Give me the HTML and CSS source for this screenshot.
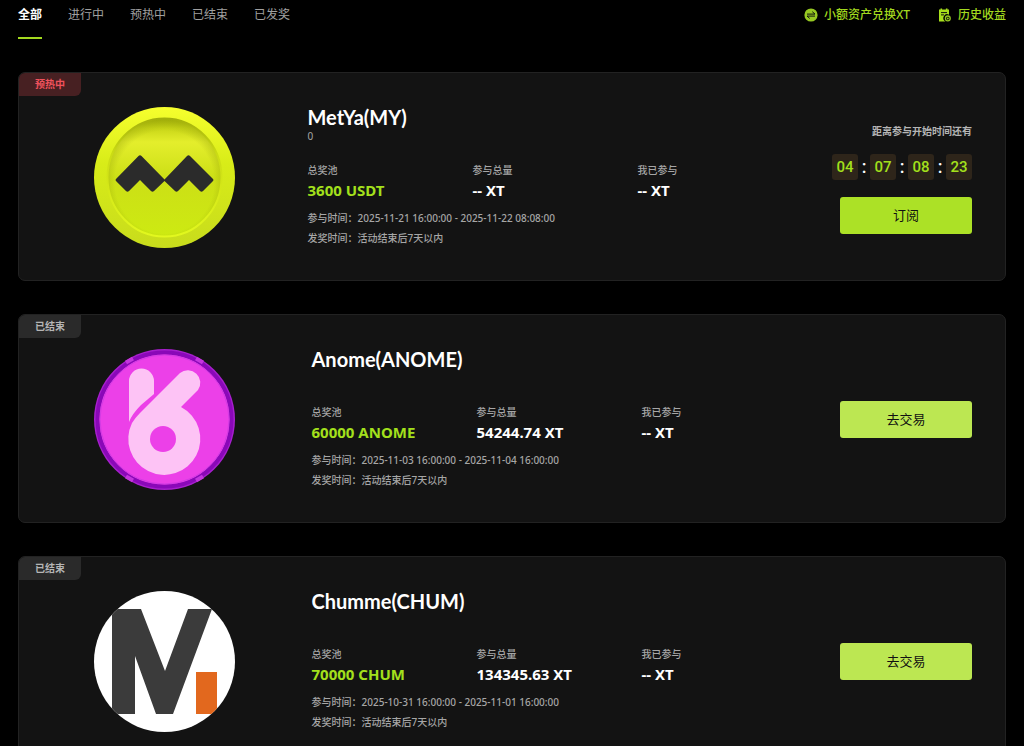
FILE: index.html
```html
<!DOCTYPE html>
<html lang="zh-CN">
<head>
    <meta charset="UTF-8">
    <meta name="viewport" content="width=device-width, initial-scale=1.0">
    <title>XT</title>
    <link rel="stylesheet" href="styles.css">
</head>
<body>

    <header class="topbar">
        <nav class="tabs">
            <button type="button" class="tab active">全部</button>
            <button type="button" class="tab">进行中</button>
            <button type="button" class="tab">预热中</button>
            <button type="button" class="tab">已结束</button>
            <button type="button" class="tab">已发奖</button>
        </nav>
        <div class="links">
            <a href="#" class="link">
                <svg class="icon" viewBox="0 0 14 14" aria-hidden="true">
                    <circle cx="7" cy="7" r="6.6" fill="#96c822"/>
                    <path d="M3 6.1h8L8.3 3.7M11 8.1H3l2.7 2.3" fill="none" stroke="#111" stroke-width="1"/>
                </svg>
                小额资产兑换XT
            </a>
            <a href="#" class="link">
                <svg class="icon" viewBox="0 0 14 14" aria-hidden="true">
                    <path d="M1 1.5h1.5V.5h1.6v1h3.8v-1h1.6v1H11v5.200a3.700 3.700 0 0 0-3.500 6.800H1z" fill="#a8e01c"/>
                    <path d="M3 4.6h6M3 6.9h3" stroke="#111" stroke-width="1"/>
                    <circle cx="9.8" cy="10.4" r="2.4" fill="none" stroke="#96c822" stroke-width="1.3"/>
                    <circle cx="9.8" cy="10.4" r="1" fill="#96c822"/>
                </svg>
                历史收益
            </a>
        </div>
    </header>

    <main class="list">
        <!-- MetYa -->
        <section class="card">
            <span class="status warming">预热中</span>
            <svg class="logo" viewBox="0 0 141 141" aria-hidden="true">
                <defs>
                    <linearGradient id="rim" x1="0" y1="0" x2="0" y2="1">
                        <stop offset="0" stop-color="#f6ff2e"/>
                        <stop offset=".4" stop-color="#d8ec18"/>
                        <stop offset="1" stop-color="#c8dc1c"/>
                    </linearGradient>
                    <linearGradient id="face" x1="0" y1="0" x2="0" y2="1">
                        <stop offset="0" stop-color="#a9b60a"/>
                        <stop offset=".08" stop-color="#c9d618"/>
                        <stop offset=".2" stop-color="#e4ee2c"/>
                        <stop offset=".5" stop-color="#ccdf16"/>
                        <stop offset="1" stop-color="#cdea12"/>
                    </linearGradient>
                    <radialGradient id="shade" cx=".5" cy=".54" r=".53">
                        <stop offset=".82" stop-color="#8f9c08" stop-opacity="0"/>
                        <stop offset="1" stop-color="#8f9c08" stop-opacity=".4"/>
                    </radialGradient>
                    <linearGradient id="edge" x1="0" y1="0" x2="0" y2="1">
                        <stop offset="0" stop-color="#a4b00c"/>
                        <stop offset=".3" stop-color="#cbdc14"/>
                        <stop offset="1" stop-color="#e2f81e"/>
                    </linearGradient>
                </defs>
                <circle cx="70.5" cy="70.5" r="70.5" fill="url(#rim)"/>
                <ellipse cx="70.5" cy="70.5" rx="57" ry="59" fill="url(#face)"/>
                <ellipse cx="70.5" cy="70.5" rx="57" ry="59" fill="url(#shade)" stroke="url(#edge)" stroke-width="2"/>
                <path d="M22 72L44.500 49q1.500-1.500 3 0l23 23.500L93 49q1.500-1.500 3 0l23 23q1 1 0 2L109 84q-1.500 1.500-3 0L95 73 84 84q-1.500 1.500-3 0L70.500 74 60 84q-1.500 1.500-3 0L46 73 35 84q-1.500 1.500-3 0L22 74q-1-1 0-2z" fill="#2b2b2b"/>
            </svg>
            <div class="info">
                <h2 class="title">MetYa(MY)</h2>
                <p class="desc">0</p>
                <dl class="metrics">
                    <div class="metric"><dt>总奖池</dt><dd class="pool">3600 USDT</dd></div>
                    <div class="metric"><dt>参与总量</dt><dd>-- XT</dd></div>
                    <div class="metric"><dt>我已参与</dt><dd>-- XT</dd></div>
                </dl>
                <p class="time">参与时间：2025-11-21 16:00:00 - 2025-11-22 08:08:00</p>
                <p class="time">发奖时间：活动结束后7天以内</p>
            </div>
            <div class="action">
                <p class="countdown-label">距离参与开始时间还有</p>
                <div class="countdown">
                    <span class="digits">04</span><span class="colon">:</span>
                    <span class="digits">07</span><span class="colon">:</span>
                    <span class="digits">08</span><span class="colon">:</span>
                    <span class="digits">23</span>
                </div>
                <button type="button" class="btn subscribe">订阅</button>
            </div>
        </section>

        <!-- Anome -->
        <section class="card">
            <span class="status">已结束</span>
            <svg class="logo" viewBox="0 0 141 141" aria-hidden="true">
                <circle cx="70.5" cy="70.5" r="70.5" fill="#a81fce"/>
                <circle cx="70.5" cy="70.5" r="67" fill="#ec40e8" stroke="#8a08b8" stroke-width="4"/>
                <circle cx="70.5" cy="70.5" r="64.5" fill="none" stroke="#d23be4" stroke-width="1"/>
                <path d="M32 13.500l7-4M102 9.500l7 4M32 127.500l7 4M102 131.500l7-4" fill="none" stroke="#c535de" stroke-width="4"/>
                <path d="M35 73V32a12.500 12.500 0 0 1 25 0v13L47 56Q38 65 35 73z" fill="#fdc3f5"/>
                <path d="M86 24A12.500 12.500 0 0 1 104 41L87 58A36 36 0 1 1 38 74Q41 69 46 64z" fill="#fdc3f5"/>
                <circle cx="69" cy="90" r="13" fill="#ec40e8"/>
            </svg>
            <div class="info">
                <h2 class="title">Anome(ANOME)</h2>
                <p class="desc"></p>
                <dl class="metrics">
                    <div class="metric"><dt>总奖池</dt><dd class="pool">60000 ANOME</dd></div>
                    <div class="metric"><dt>参与总量</dt><dd>54244.74 XT</dd></div>
                    <div class="metric"><dt>我已参与</dt><dd>-- XT</dd></div>
                </dl>
                <p class="time">参与时间：2025-11-03 16:00:00 - 2025-11-04 16:00:00</p>
                <p class="time">发奖时间：活动结束后7天以内</p>
            </div>
            <div class="action">
                <button type="button" class="btn">去交易</button>
            </div>
        </section>

        <!-- Chumme -->
        <section class="card">
            <span class="status">已结束</span>
            <svg class="logo" viewBox="0 0 141 141" aria-hidden="true">
                <defs>
                    <clipPath id="disc"><circle cx="70.5" cy="70.5" r="70.5"/></clipPath>
                </defs>
                <g clip-path="url(#disc)">
                    <rect width="141" height="141" fill="#fff"/>
                    <path d="M18 18h29l24 62 23-62h24L79 123H62L41 65v58H18z" fill="#3b3b3b"/>
                    <rect x="102" y="81" width="21" height="42" fill="#e2681e"/>
                </g>
            </svg>
            <div class="info">
                <h2 class="title">Chumme(CHUM)</h2>
                <p class="desc"></p>
                <dl class="metrics">
                    <div class="metric"><dt>总奖池</dt><dd class="pool">70000 CHUM</dd></div>
                    <div class="metric"><dt>参与总量</dt><dd>134345.63 XT</dd></div>
                    <div class="metric"><dt>我已参与</dt><dd>-- XT</dd></div>
                </dl>
                <p class="time">参与时间：2025-10-31 16:00:00 - 2025-11-01 16:00:00</p>
                <p class="time">发奖时间：活动结束后7天以内</p>
            </div>
            <div class="action">
                <button type="button" class="btn">去交易</button>
            </div>
        </section>
    </main>

</body>
</html>
```

FILE: styles.css
```css
* {
    box-sizing: border-box;
}

body {
    margin: 0;
    padding: 0 18px 33px;
    background-color: #000;
    color: #fff;
    font-family: "Noto Sans", "Noto Sans CJK SC", sans-serif;
    font-size: 12px;
}

h2, p, dl, dd {
    margin: 0;
}

button {
    font-family: inherit;
    border: none;
    cursor: pointer;
}

/* Top bar */
.topbar {
    display: flex;
    justify-content: space-between;
    align-items: flex-start;
    margin-bottom: 33px;
}

.tabs {
    display: flex;
    gap: 26px;
}

.tab {
    padding: 5px 0 12px;
    background: none;
    border-bottom: 2px solid transparent;
    color: #a0a0a0;
    font-size: 12px;
    line-height: 20px;
}

.tab.active {
    color: #fff;
    font-weight: 700;
    border-bottom-color: #a3d91f;
}

.links {
    display: flex;
    gap: 28px;
    padding-top: 5px;
}

.link {
    display: flex;
    align-items: center;
    gap: 6px;
    color: #a3d91f;
    font-weight: 500;
    line-height: 20px;
    text-decoration: none;
}

.icon {
    width: 14px;
    height: 14px;
}

/* Project cards */
.list {
    display: flex;
    flex-direction: column;
    gap: 33px;
}

.card {
    position: relative;
    display: flex;
    justify-content: space-between;
    align-items: center;
    padding: 34px 33px 32px 75px;
    background-color: #131313;
    border: 1px solid #222;
    border-radius: 7px;
}

.status {
    position: absolute;
    top: 0;
    left: 0;
    padding: 0 16px;
    background-color: #2a2a2a;
    border-radius: 6px 0 6px 0;
    color: #b5b5b5;
    font-size: 10px;
    font-weight: 700;
    line-height: 23px;
}

.status.warming {
    background-color: #472022;
    color: #f0525c;
}

.logo {
    width: 141px;
    height: 141px;
}

.info {
    width: 452px;
}

.title {
    font-family: Lato, sans-serif;
    font-size: 20px;
    font-weight: 700;
    line-height: 20px;
}

.desc {
    height: 18px;
    margin-bottom: 16px;
    color: #a6a6a6;
    font-size: 10px;
    line-height: 18px;
}

.metrics {
    display: flex;
    margin-bottom: 7px;
}

.metric {
    flex: 0 0 165px;
}

.metric:last-child {
    flex: 1;
}

.metric dt {
    color: #a6a6a6;
    font-size: 10px;
    font-weight: 500;
    line-height: 18px;
}

.metric dd {
    font-size: 15px;
    font-weight: 700;
    line-height: 22px;
}

.metric .pool {
    color: #a3e01c;
}

.time {
    color: #a6a6a6;
    font-size: 10px;
    font-weight: 500;
    line-height: 20px;
}

/* Right column */
.action {
    display: flex;
    flex-direction: column;
    align-items: flex-end;
}

.countdown-label {
    margin-bottom: 14px;
    color: #b5b5b5;
    font-size: 10px;
    font-weight: 700;
    line-height: 18px;
}

.countdown {
    display: flex;
    margin-bottom: 17px;
    font-family: Roboto, sans-serif;
    font-size: 15px;
    font-weight: 500;
    line-height: 26px;
    text-align: center;
}

.digits {
    width: 26px;
    background-color: #2e251a;
    border-radius: 3px;
    color: #a3e01c;
}

.colon {
    width: 12px;
    font-size: 18px;
}

.btn {
    width: 132px;
    padding: 0;
    background-color: #bce752;
    border-radius: 3px;
    color: #111;
    font-size: 13px;
    line-height: 37px;
}

.btn.subscribe {
    background-color: #ace126;
}
```
